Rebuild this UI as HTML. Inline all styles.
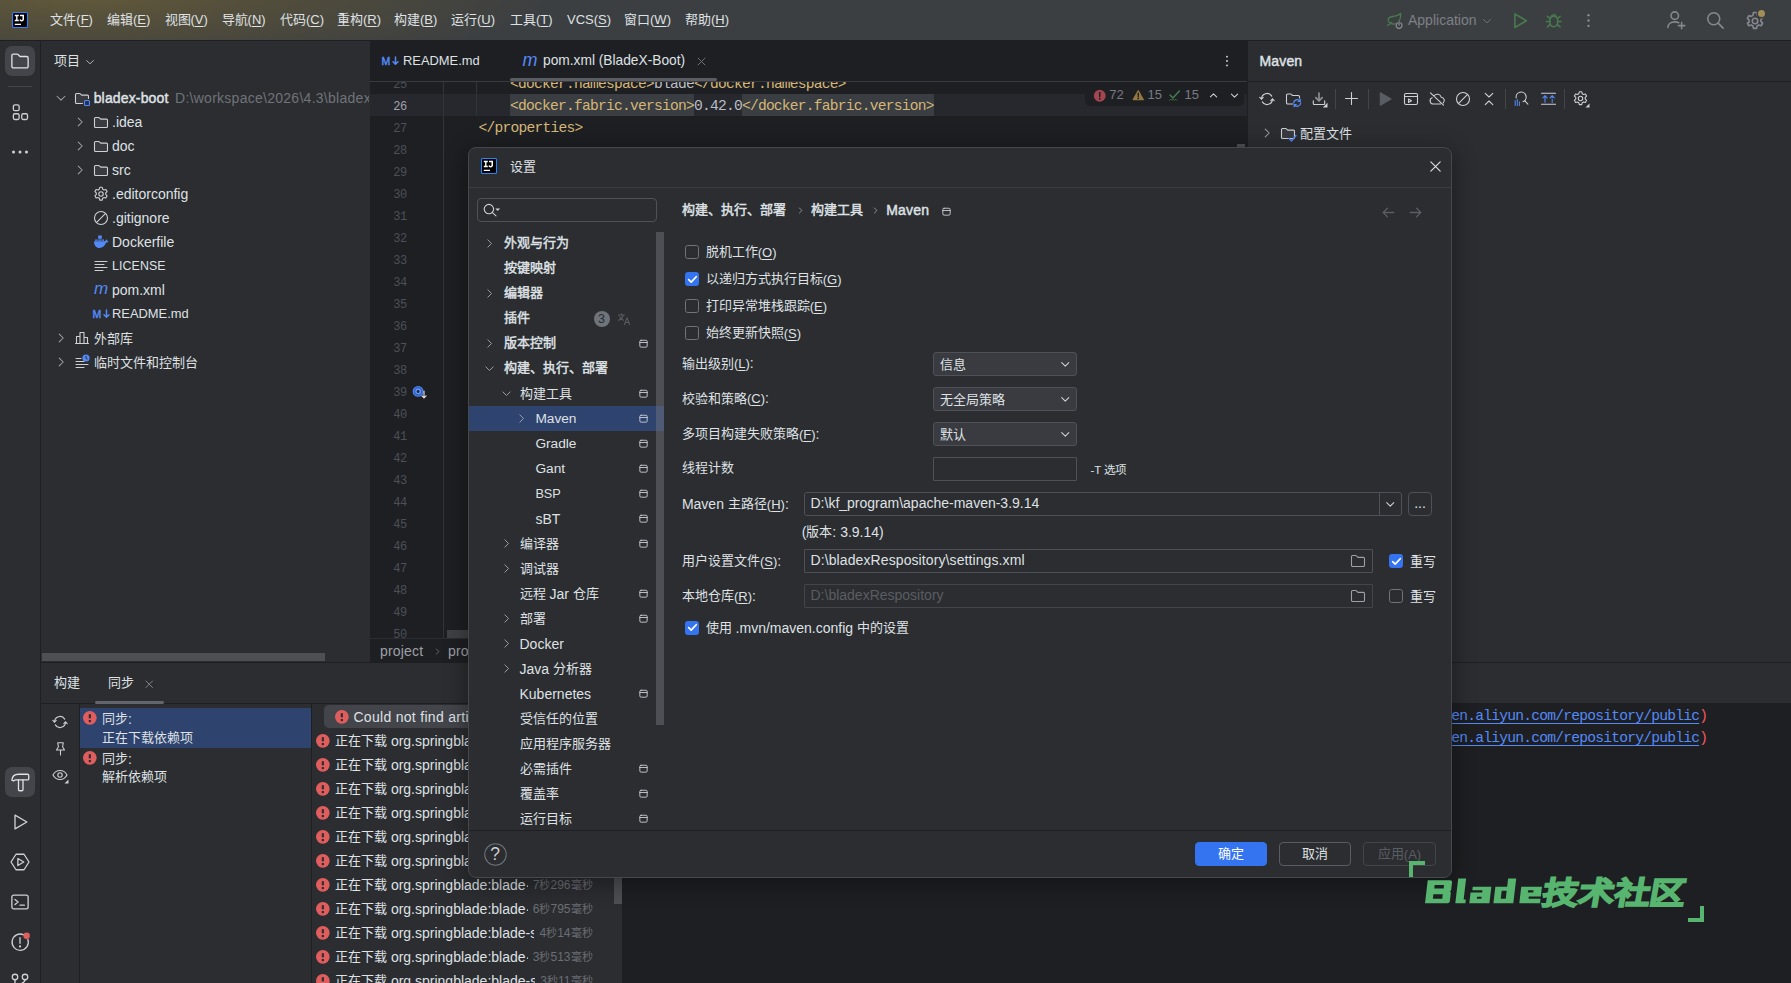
<!DOCTYPE html>
<html lang="zh-CN"><head><meta charset="utf-8"><title>bladex-boot – pom.xml (BladeX-Boot)</title>
<style>
html,body{margin:0;padding:0;background:#1e1f22;}
body{width:1791px;height:983px;overflow:hidden;position:relative;font-family:"Liberation Sans",sans-serif;font-size:14px;color:#dfe1e5;}
.t{position:absolute;white-space:nowrap;font-size:14px;color:#dfe1e5;}
.c{font-size:13px;font-weight:400;position:relative;top:-0.7px;}
.bold{font-weight:normal;font-size:14px;letter-spacing:0.15px;-webkit-text-stroke:0.45px currentColor;}
.bold .c{font-weight:400;letter-spacing:0;}
.b{position:absolute;box-sizing:border-box;}
.i{position:absolute;overflow:visible;color:#ced0d6;fill:none;stroke:currentColor;stroke-width:1.1;stroke-linecap:round;stroke-linejoin:round;}
.m{font-family:"Liberation Mono",monospace;font-size:14.6px;letter-spacing:-0.762px;}
.g{color:#868a91;}
.k{font-size:13px;}
u{text-decoration:underline;text-underline-offset:2px;text-decoration-thickness:1px;}
.clip{position:absolute;overflow:hidden;}

.ln{font-family:"Liberation Mono",monospace;font-size:12px;letter-spacing:-0.45px;color:#4b5059;text-align:right;}
.tag{color:#d5b778;}
.txt{color:#bcbec4;}
.hl{background:#3a3d41;}
.cb{position:absolute;box-sizing:border-box;width:14px;height:14px;border:1px solid #6f737a;border-radius:2.5px;background:#2b2d30;}
.cb.on{background:#3574f0;border-color:#3574f0;}
.inp{position:absolute;box-sizing:border-box;border:1px solid #4e5157;border-radius:4px;background:#2b2d30;}
.btn{position:absolute;box-sizing:border-box;border:1px solid #5a5d63;border-radius:4px;text-align:center;}
.lnk{color:#548af7;text-decoration:underline;text-underline-offset:3px;}

</style></head><body>
<svg width="0" height="0" style="position:absolute"><defs>

<g id="ijlogo"><rect x=".5" y=".5" width="15" height="15" rx="1" fill="#000" stroke="#2a84f5" stroke-width="1.100"/><path fill="#fff" stroke="none" d="M2.800 2.800h4v1.400H5.500v3.600h1.300v1.400h-4V7.800h1.300V4.200H2.800ZM8 2.800h4v4.300c0 1.500-.9 2.300-2.300 2.300-1.200 0-2-.6-2.300-1.600l1.200-.6c.2.600.5.800 1 .8.600 0 .9-.4.900-1V4.200H8ZM2.800 11.800h6.200v1.200H2.800Z"/></g>
<g id="chevR"><path d="M6 3.5L10.5 8L6 12.5"/></g>
<g id="chevD"><path d="M3.5 6L8 10.5L12.5 6"/></g>
<g id="chevU"><path d="M3.5 10L8 5.5L12.5 10"/></g>
<g id="folder"><path fill="#393b40" d="M1.500 4.500a1 1 0 0 1 1-1H5.700a1 1 0 0 1 .7.3L7.700 5.100H13.500a1 1 0 0 1 1 1V12.500a1 1 0 0 1-1 1H2.500a1 1 0 0 1-1-1Z"/></g>
<g id="modfolder"><path fill="#393b40" d="M8.500 13.500H2.500a1 1 0 0 1-1-1V4.500a1 1 0 0 1 1-1H5.700a1 1 0 0 1 .7.3L7.700 5.100H13.500a1 1 0 0 1 1 1V8.500"/><rect x="10.5" y="10.5" width="5" height="5" rx="1" stroke="#548af7" fill="#25324d"/></g>
<g id="gearfile"><circle cx="8" cy="8" r="2.200"/><path d="M6.800 1.300h2.400l.5 1.900 1.300.75 1.900-.5 1.200 2.100-1.400 1.400v1.500l1.400 1.400-1.200 2.100-1.900-.5-1.300.75-.5 1.900H6.800l-.5-1.900-1.300-.75-1.900.5-1.200-2.100 1.400-1.400V6.950L1.900 5.550l1.200-2.100 1.900.5 1.300-.75Z"/></g>
<g id="ignore"><circle cx="8" cy="8" r="6.5"/><path d="M3.6 12.4L12.4 3.6"/></g>
<g id="docker"><path fill="#548af7" stroke="none" d="M5.2 1.5h3.6v3.3H5.2zM1 7.2h11.2c.3-1 .9-1.6 1.6-1.9.3.5.4 1 .3 1.6.5-.1 1 .1 1.4.5-.5.9-1.4 1.2-2.4 1.2C12 12 9.600 14 6.500 14 3.200 14 1 11.500 1 7.200zM2 5.400h2.600v1.400H2zM5.200 5.400h2.600v1.400H5.200zM8.400 5.400h2.600v1.400H8.400z"/></g>
<g id="textfile"><path d="M2 3.500h12M2 6.500h9M2 9.500h12M2 12.500h8"/></g>
<g id="library"><path d="M2.500 13.500V6.500h3.500v7M6 13.500V2.500h4v11M10 13.500V7.500h3.500v6M1.500 13.500h13"/></g>
<g id="scratch"><path d="M2 4.500h5M2 7.500h8M2 10.500h12M2 13.500h8"/><circle cx="12" cy="4" r="3.6" fill="#548af7" stroke="none"/><path d="M12 2.300V4.200l1.200.8" stroke="#2b2d30" stroke-width="1"/></g>
<g id="close"><path d="M3 3L13 13M13 3L3 13"/></g>
<g id="kebab"><circle cx="8" cy="3" r="1.100" fill="currentColor" stroke="none"/><circle cx="8" cy="8" r="1.100" fill="currentColor" stroke="none"/><circle cx="8" cy="13" r="1.100" fill="currentColor" stroke="none"/></g>
<g id="dots"><circle cx="3.300" cy="8" r="1.100" fill="currentColor" stroke="none"/><circle cx="8" cy="8" r="1.100" fill="currentColor" stroke="none"/><circle cx="12.700" cy="8" r="1.100" fill="currentColor" stroke="none"/></g>
<g id="err"><circle cx="8" cy="8" r="7" fill="#e05d5d" stroke="none"/><path d="M8 4.300V8.500" stroke="#2b2d30" stroke-width="2.200" stroke-linecap="butt"/><rect x="6.900" y="10.200" width="2.200" height="2.200" fill="#2b2d30" stroke="none"/></g>
<g id="errs"><circle cx="8" cy="8" r="7" fill="#a3464f" stroke="none"/><path d="M8 4.200V8.800" stroke="#1e1f22" stroke-width="1.800"/><circle cx="8" cy="11.500" r="1.100" fill="#1e1f22" stroke="none"/></g>
<g id="warn"><path d="M8 2.500L14.300 13.500H1.700Z" fill="#957741" stroke="#957741" stroke-width="1.8"/><path d="M8 5.500V9.500" stroke="#1e1f22" stroke-width="1.800"/><circle cx="8" cy="12" r="1.100" fill="#1e1f22" stroke="none"/></g>
<g id="okcheck"><path d="M2.500 7.500L6 11L14 2.500" stroke="#46824f" stroke-width="1.700"/><path d="M2 14l1.500-1.500L5 14l1.500-1.500L8 14l1.500-1.500L11 14" stroke="#46824f" stroke-width="1"/></g>
<g id="refresh"><path d="M2.500 8A5.500 5.500 0 0 1 12.700 5.100M13.500 8A5.500 5.500 0 0 1 3.300 10.900"/><path d="M0.800 6.400L2.500 8.100L4.200 6.400M11.800 9.600L13.500 7.900L15.200 9.600"/></g>
<g id="foldersync"><path d="M7.500 13H2.700a1.200 1.200 0 0 1-1.200-1.200V4.200a1.200 1.200 0 0 1 1.200-1.200H5.600a1 1 0 0 1 .75.330L7.600 4.500H13.300a1.200 1.200 0 0 1 1.200 1.200V7"/><g stroke="#548af7" stroke-width="1.300"><path d="M15.700 12a3.500 3.500 0 0 1-6.400 1.700M8.700 12a3.500 3.500 0 0 1 6.400-1.700"/><path d="M13.200 10.300h2V8.300M11.200 13.700h-2v2"/></g></g>
<g id="download"><path d="M8 2v7.500M4.800 6.700L8 9.800l3.200-3.100" stroke="#8c8e93" stroke-width="1.700"/><path d="M2.300 9.800v2.700a1 1 0 0 0 1 1h9.400a1 1 0 0 0 1-1V9.800"/><path d="M16.500 11.800V16.500H11.800Z" fill="currentColor" stroke="none"/></g>
<g id="plus"><path d="M7.500 1.500v12M1.500 7.500h12"/></g>
<g id="playfill"><path d="M3.300 1.800L14 8L3.300 14.200Z" fill="#5a5d63" stroke="#5a5d63"/></g>
<g id="winplay"><rect x="1.500" y="2.500" width="13" height="11" rx="1.500"/><path d="M1.500 5.500h13M5.500 8v3.500L8.500 9.700Z"/></g>
<g id="cloudoff"><path d="M5 4.800A4.200 4.200 0 0 1 12.300 6.300a3.200 3.200 0 0 1 2 5.500M11.500 13H4.200a3.200 3.200 0 0 1-1-6.200M1.500 1.800L14.500 14.200"/></g>
<g id="noentry"><circle cx="8" cy="8" r="6.500"/><path d="M3.600 12.400L12.400 3.600"/></g>
<g id="collapse"><path d="M4.200 2.300L8 6L11.800 2.300M4.200 13.700L8 10L11.800 13.700"/></g>
<g id="analyze"><path d="M3.200 7A5 5 0 1 1 10 10.700"/><path d="M11.600 9.700L14.900 13.100"/><path d="M2.200 9.500v5M4.300 8.500v6M6.400 10.800v3.700" stroke="#548af7" stroke-width="1"/></g>
<g id="ttblue"><path d="M1.500 2.300h14M1.500 13.200h14"/><path stroke="#548af7" d="M5 11.300V4.700M2.900 6.800L5 4.700L7.100 6.800M12.200 6.500V4.700M10.100 6.800L12.200 4.700L14.300 6.800M12.200 8.200v1.300M12.200 10.600v.9"/></g>
<g id="gear"><circle cx="8" cy="8" r="2"/><path d="M6.900 1.800h2.200l.45 1.700 1.200.7 1.700-.47 1.100 1.900-1.250 1.250v1.400l1.250 1.250-1.100 1.900-1.700-.47-1.200.7-.45 1.700H6.900l-.45-1.700-1.200-.7-1.700.47-1.100-1.900L3.700 8.700V7.300L2.450 6.050l1.100-1.900 1.700.47 1.200-.7Z"/></g>
<g id="geardd"><circle cx="7.500" cy="7.500" r="2.200"/><path d="M6.300 .8h2.400l.5 1.900 1.300.75 1.900-.5 1.200 2.100-1.400 1.400v1.500l1.400 1.400-1.200 2.100-1.900-.5-1.300.75-.5 1.900H6.300l-.5-1.900-1.300-.75-1.900.5-1.200-2.100 1.400-1.400V6.450L1.400 5.050l1.200-2.100 1.900.5 1.300-.75Z"/><path d="M16.500 12.500v4h-4Z" fill="currentColor" stroke="none"/></g>
<g id="search"><circle cx="7" cy="7" r="4.800"/><path d="M10.500 10.500L14.500 14.500"/></g>
<g id="searchdd"><circle cx="4.900" cy="6.100" r="4.700"/><path d="M8.500 9.700L12 12.900"/><path d="M11.300 5.600h4.800l-2.400 2.500Z" fill="currentColor" stroke="none"/></g>
<g id="projcfg"><rect x="3.500" y="4" width="9" height="8.500" rx="1.500"/><path d="M3.500 6.800h9"/></g>
<g id="translate"><path d="M1.500 3.500h7M5 2v1.500M7.200 3.500C6.500 6.500 4.500 8.500 2 9.500M3.200 5.500C4 7.500 5.500 8.800 7.500 9.500M8.500 14.500L11.500 6.500L14.500 14.500M9.500 12h4"/></g>
<g id="arrowL"><path d="M13 8H3M7 4L3 8L7 12"/></g>
<g id="arrowR"><path d="M3 8H13M9 4L13 8L9 12"/></g>
<g id="pin"><path d="M5 1.800h6L10.200 6.200L12.300 9.700H3.700L5.800 6.200ZM8 9.700V14.800"/></g>
<g id="eye"><path d="M1 8C2.500 5 5 3.500 8 3.500S13.500 5 15 8C13.500 11 11 12.500 8 12.500S2.500 11 1 8Z"/><circle cx="8" cy="8" r="2.200"/><path d="M16.500 12.500v4H12.500Z" fill="currentColor" stroke="none"/></g>
<g id="tw_folder"><path d="M1.500 3.700a1.200 1.200 0 0 1 1.200-1.200H5.600a1.200 1.200 0 0 1 .85.350L8 4.400H13.300a1.200 1.200 0 0 1 1.200 1.200V12.300a1.200 1.200 0 0 1-1.200 1.200H2.700a1.200 1.200 0 0 1-1.200-1.200Z"/></g>
<g id="structure"><rect x="2.700" y="2.300" width="4.600" height="4.600" rx="1.200"/><rect x="2.700" y="9.400" width="4.600" height="4.600" rx="1.200"/><rect x="9.400" y="9.400" width="4.600" height="4.600" rx="1.200"/></g>
<g id="hammer"><path d="M6.800 6.300V14a1 1 0 0 0 1 1h1.600a1 1 0 0 0 1-1V6.300"/><path d="M1.500 6.500C1.800 3.600 3.800 1.800 6.800 1.800H14a1 1 0 0 1 1 1V5.300a1 1 0 0 1-1 1H4.800C4 6.300 3.400 6.600 3 7.200Z"/></g>
<g id="run"><path d="M4 2.500L13.500 8L4 13.500Z"/></g>
<g id="services"><path d="M4.800 1.800h6.400L15.200 8L11.200 14.200H4.800L.8 8Z"/><path d="M6.300 5.200v5.600L11 8Z"/></g>
<g id="terminal"><rect x="1.500" y="2.500" width="13" height="11" rx="1.500"/><path d="M4 6l2.500 2L4 10M8 10.500h3.500"/></g>
<g id="problems"><path d="M11 2.300A6.500 6.500 0 1 0 14.300 6"/><path d="M8 4.500V9"/><circle cx="8" cy="11.500" r=".9" fill="currentColor" stroke="none"/><circle cx="13.300" cy="3" r="2.600" fill="#e05d5d" stroke="none"/></g>
<g id="git"><circle cx="4" cy="4" r="2.200"/><circle cx="12" cy="4" r="2.200"/><path d="M4 6.200V16M12 6.200c0 4-8 3-8 7"/></g>
<g id="spring"><path d="M13.800 1.300C14.300 6 12.300 11.300 7.200 11.300C4.200 11.300 1.800 9.400 2.100 6.900C2.500 4 6.200 4.300 9.200 3.700C11.200 3.300 13 2.500 13.800 1.300Z" stroke="#487a4f" stroke-width="1.200"/><path d="M1.300 12.600C3 12 4.500 11 5.500 9.800" stroke="#487a4f" stroke-width="1.200"/><circle cx="12.300" cy="12.300" r="3.600" fill="#3c3f41" stroke="none"/><path d="M10.700 10.300A2.800 2.800 0 1 0 13.900 10.300M12.300 9.300V12.300" stroke="#8c8f96" stroke-width="1.100"/></g>
<g id="bug"><path d="M4.800 8.300a3.200 3.200 0 0 1 6.400 0v2.200a3.200 3.200 0 0 1-6.400 0Z"/><path d="M5.800 5.600A2.300 2.300 0 0 1 10.200 5.600M4.800 9.500H2M14 9.500H11.200M5 7L2.800 5.200M11 7L13.200 5.200M5.200 11.800L2.800 13.800M10.800 11.800L13.200 13.800"/></g>
<g id="adduser"><circle cx="7" cy="4.500" r="3"/><path d="M1.500 14c0-3 2.500-4.500 5.500-4.500 1.200 0 2.300.25 3.200.7M12.500 10v5M10 12.500h5"/></g>
<g id="help"><circle cx="8" cy="8" r="7.500" stroke-width=".7"/></g>
<g id="check"><path d="M3.300 8.200L6.400 11.300L12.600 4.600" stroke="#fff" stroke-width="2.100"/></g>
<g id="gutter"><circle cx="6.500" cy="6.800" r="5.200" stroke="#4b82f0" stroke-width="1.300" fill="#3263c4"/><circle cx="6.500" cy="6.800" r="2.300" stroke="#6ea1ff" stroke-width="1.300" fill="#1e2a4a"/><path d="M12.800 6.500v7.300M10.600 11.600l2.200 2.200 2.200-2.200" stroke="#dfe1e5" stroke-width="1.200"/></g>

</defs></svg>
<div class="b " style="left:0px;top:0px;width:1791px;height:40px;background:radial-gradient(ellipse 470px 80px at 80px -6px,#625a3b 0%,#534e3b 38%,rgba(60,63,65,0) 100%),#3c3f41;"></div>
<div class="b " style="left:0px;top:40px;width:1791px;height:1px;background:#1e1f22;"></div>
<svg class="i" style="left:12px;top:12px;width:16px;height:16px;" viewBox="0 0 16 16"><use href="#ijlogo"/></svg>
<div class="t " style="left:50.3px;top:10.3px;height:20px;line-height:20px;font-size:13px;"><span class="c">文件</span><span class="k">(<u>F</u>)</span></div>
<div class="t " style="left:107px;top:10.3px;height:20px;line-height:20px;font-size:13px;"><span class="c">编辑</span><span class="k">(<u>E</u>)</span></div>
<div class="t " style="left:164.5px;top:10.3px;height:20px;line-height:20px;font-size:13px;"><span class="c">视图</span><span class="k">(<u>V</u>)</span></div>
<div class="t " style="left:221.6px;top:10.3px;height:20px;line-height:20px;font-size:13px;"><span class="c">导航</span><span class="k">(<u>N</u>)</span></div>
<div class="t " style="left:280px;top:10.3px;height:20px;line-height:20px;font-size:13px;"><span class="c">代码</span><span class="k">(<u>C</u>)</span></div>
<div class="t " style="left:337px;top:10.3px;height:20px;line-height:20px;font-size:13px;"><span class="c">重构</span><span class="k">(<u>R</u>)</span></div>
<div class="t " style="left:394px;top:10.3px;height:20px;line-height:20px;font-size:13px;"><span class="c">构建</span><span class="k">(<u>B</u>)</span></div>
<div class="t " style="left:451px;top:10.3px;height:20px;line-height:20px;font-size:13px;"><span class="c">运行</span><span class="k">(<u>U</u>)</span></div>
<div class="t " style="left:510px;top:10.3px;height:20px;line-height:20px;font-size:13px;"><span class="c">工具</span><span class="k">(<u>T</u>)</span></div>
<div class="t " style="left:567px;top:10.3px;height:20px;line-height:20px;font-size:13px;">VCS<span class="k">(<u>S</u>)</span></div>
<div class="t " style="left:624px;top:10.3px;height:20px;line-height:20px;font-size:13px;"><span class="c">窗口</span><span class="k">(<u>W</u>)</span></div>
<div class="t " style="left:685px;top:10.3px;height:20px;line-height:20px;font-size:13px;"><span class="c">帮助</span><span class="k">(<u>H</u>)</span></div>
<svg class="i" style="left:1386px;top:12px;width:17px;height:17px;" viewBox="0 0 16 16"><use href="#spring"/></svg>
<div class="t " style="left:1408px;top:10.3px;height:20px;line-height:20px;color:#7d8087;">Application</div>
<svg class="i" style="left:1481px;top:14.5px;width:12px;height:12px;color:#7d8087;" viewBox="0 0 16 16"><use href="#chevD"/></svg>
<svg class="i" style="left:1510.25px;top:10.75px;width:19.5px;height:19.5px;color:#487a4f;stroke-width:1.3;" viewBox="0 0 16 16"><use href="#run"/></svg>
<svg class="i" style="left:1544.25px;top:10.25px;width:19.5px;height:19.5px;color:#487a4f;stroke-width:1.25;" viewBox="0 0 16 16"><use href="#bug"/></svg>
<svg class="i" style="left:1579.5px;top:11.5px;width:17px;height:17px;color:#8c8f96;" viewBox="0 0 16 16"><use href="#kebab"/></svg>
<svg class="i" style="left:1666px;top:10px;width:20px;height:20px;color:#85888f;stroke-width:1.25;" viewBox="0 0 16 16"><use href="#adduser"/></svg>
<svg class="i" style="left:1705px;top:10px;width:20px;height:20px;color:#85888f;stroke-width:1.25;" viewBox="0 0 16 16"><use href="#search"/></svg>
<svg class="i" style="left:1743.5px;top:9.5px;width:22px;height:22px;color:#85888f;stroke-width:1.2;" viewBox="0 0 16 16"><use href="#gear"/></svg>
<div class="b " style="left:1757.5px;top:9.5px;width:7.5px;height:7.5px;background:#a48d57;border-radius:50%;box-shadow:0 0 0 1.5px #3c3f41;"></div>
<div class="b " style="left:0px;top:41px;width:40px;height:942px;background:#2b2d30;"></div>
<div class="b " style="left:40px;top:41px;width:1px;height:942px;background:#1e1f22;"></div>
<div class="b " style="left:5px;top:46px;width:30px;height:30px;background:#43454a;border-radius:7px;"></div>
<svg class="i" style="left:9.5px;top:51px;width:20px;height:20px;color:#dfe1e5;stroke-width:1.05;" viewBox="0 0 16 16"><use href="#tw_folder"/></svg>
<div class="b " style="left:8px;top:86px;width:24px;height:1px;background:#43454a;"></div>
<svg class="i" style="left:9.5px;top:102px;width:20px;height:20px;color:#ced0d6;stroke-width:1.05;" viewBox="0 0 16 16"><use href="#structure"/></svg>
<svg class="i" style="left:8.5px;top:141px;width:22px;height:22px;color:#ced0d6;" viewBox="0 0 16 16"><use href="#dots"/></svg>
<div class="b " style="left:5px;top:767px;width:30px;height:30px;background:#43454a;border-radius:7px;"></div>
<svg class="i" style="left:9.5px;top:772px;width:20px;height:20px;color:#dfe1e5;stroke-width:1.05;" viewBox="0 0 16 16"><use href="#hammer"/></svg>
<svg class="i" style="left:10px;top:812px;width:20px;height:20px;color:#ced0d6;stroke-width:1.05;" viewBox="0 0 16 16"><use href="#run"/></svg>
<svg class="i" style="left:9.5px;top:852px;width:20px;height:20px;color:#ced0d6;stroke-width:1.05;" viewBox="0 0 16 16"><use href="#services"/></svg>
<svg class="i" style="left:9.5px;top:892px;width:20px;height:20px;color:#ced0d6;stroke-width:1.05;" viewBox="0 0 16 16"><use href="#terminal"/></svg>
<svg class="i" style="left:9.5px;top:932px;width:20px;height:20px;color:#ced0d6;stroke-width:1.05;" viewBox="0 0 16 16"><use href="#problems"/></svg>
<svg class="i" style="left:9.5px;top:972px;width:20px;height:20px;color:#ced0d6;stroke-width:1.05;" viewBox="0 0 16 16"><use href="#git"/></svg>
<div class="b " style="left:41px;top:41px;width:329px;height:621px;background:#2b2d30;"></div>
<div class="t " style="left:53.5px;top:51px;height:20px;line-height:20px;"><span class="c">项目</span></div>
<svg class="i" style="left:83.5px;top:55.5px;width:12px;height:12px;color:#ced0d6;" viewBox="0 0 16 16"><use href="#chevD"/></svg>
<svg class="i" style="left:54px;top:91px;width:14px;height:14px;color:#9da0a8;stroke-width:1.2;" viewBox="0 0 16 16"><use href="#chevD"/></svg>
<svg class="i" style="left:74px;top:90px;width:16px;height:16px;color:#ced0d6;" viewBox="0 0 16 16"><use href="#modfolder"/></svg>
<div class="t bold" style="left:93.7px;top:88.4px;height:20px;line-height:20px;">bladex-boot</div>
<svg class="i" style="left:72.5px;top:115px;width:14px;height:14px;color:#9da0a8;stroke-width:1.2;" viewBox="0 0 16 16"><use href="#chevR"/></svg>
<svg class="i" style="left:93px;top:114px;width:16px;height:16px;color:#ced0d6;" viewBox="0 0 16 16"><use href="#folder"/></svg>
<div class="t " style="left:112px;top:112.4px;height:20px;line-height:20px;">.idea</div>
<svg class="i" style="left:72.5px;top:139px;width:14px;height:14px;color:#9da0a8;stroke-width:1.2;" viewBox="0 0 16 16"><use href="#chevR"/></svg>
<svg class="i" style="left:93px;top:138px;width:16px;height:16px;color:#ced0d6;" viewBox="0 0 16 16"><use href="#folder"/></svg>
<div class="t " style="left:112px;top:136.4px;height:20px;line-height:20px;">doc</div>
<svg class="i" style="left:72.5px;top:163px;width:14px;height:14px;color:#9da0a8;stroke-width:1.2;" viewBox="0 0 16 16"><use href="#chevR"/></svg>
<svg class="i" style="left:93px;top:162px;width:16px;height:16px;color:#ced0d6;" viewBox="0 0 16 16"><use href="#folder"/></svg>
<div class="t " style="left:112px;top:160.4px;height:20px;line-height:20px;">src</div>
<svg class="i" style="left:93px;top:186px;width:16px;height:16px;color:#ced0d6;" viewBox="0 0 16 16"><use href="#gearfile"/></svg>
<div class="t " style="left:112px;top:184.4px;height:20px;line-height:20px;">.editorconfig</div>
<svg class="i" style="left:93px;top:210px;width:16px;height:16px;color:#ced0d6;" viewBox="0 0 16 16"><use href="#ignore"/></svg>
<div class="t " style="left:112px;top:208.4px;height:20px;line-height:20px;">.gitignore</div>
<svg class="i" style="left:93px;top:234px;width:16px;height:16px;color:#ced0d6;" viewBox="0 0 16 16"><use href="#docker"/></svg>
<div class="t " style="left:112px;top:232.4px;height:20px;line-height:20px;">Dockerfile</div>
<svg class="i" style="left:93px;top:258px;width:16px;height:16px;color:#ced0d6;" viewBox="0 0 16 16"><use href="#textfile"/></svg>
<div class="t " style="left:112px;top:256.4px;height:20px;line-height:20px;font-size:12.4px;letter-spacing:0.1px;">LICENSE</div>
<div class="t " style="left:93px;top:280.5px;height:16px;line-height:16px;font-style:italic;font-size:17px;color:#548af7;width:16px;text-align:center;">m</div>
<div class="t " style="left:112px;top:280.4px;height:20px;line-height:20px;">pom.xml</div>
<div class="t bold" style="left:92.5px;top:308px;height:12px;line-height:12px;font-size:10.5px;color:#548af7;letter-spacing:0;">M</div>
<svg class="i" style="left:102.5px;top:309px;width:7px;height:10px;color:#548af7;stroke-width:1.5" viewBox="0 0 7 10"><path d="M3.500 1V8M1 5.700L3.500 8.200L6 5.700"/></svg>
<div class="t " style="left:112px;top:304.4px;height:20px;line-height:20px;font-size:12.9px;">README.md</div>
<svg class="i" style="left:54px;top:331px;width:14px;height:14px;color:#9da0a8;stroke-width:1.2;" viewBox="0 0 16 16"><use href="#chevR"/></svg>
<svg class="i" style="left:74px;top:330px;width:16px;height:16px;color:#ced0d6;" viewBox="0 0 16 16"><use href="#library"/></svg>
<div class="t " style="left:93.7px;top:328.4px;height:20px;line-height:20px;"><span class="c">外部库</span></div>
<svg class="i" style="left:54px;top:355px;width:14px;height:14px;color:#9da0a8;stroke-width:1.2;" viewBox="0 0 16 16"><use href="#chevR"/></svg>
<svg class="i" style="left:74px;top:354px;width:16px;height:16px;color:#ced0d6;" viewBox="0 0 16 16"><use href="#scratch"/></svg>
<div class="t " style="left:93.7px;top:352.4px;height:20px;line-height:20px;"><span class="c">临时文件和控制台</span></div>
<div class="clip" style="left:175px;top:86px;width:194px;height:24px;"><div class="t g" style="left:0;top:2px;height:20px;line-height:20px;color:#6f737a;letter-spacing:0.27px;">D:\workspace\2026\4.3\bladex-boot</div></div>
<div class="b " style="left:42px;top:653px;width:283px;height:8px;background:#4d4f53;"></div>
<div class="b " style="left:41px;top:662px;width:1750px;height:1px;background:#1e1f22;"></div>
<div class="b " style="left:370px;top:41px;width:877px;height:621px;background:#1e1f22;"></div>
<div class="b " style="left:370px;top:81px;width:877px;height:1px;background:#393b40;"></div>
<div class="t bold" style="left:381.5px;top:55px;height:12px;line-height:12px;font-size:10.5px;color:#548af7;letter-spacing:0;">M</div>
<svg class="i" style="left:391.5px;top:56px;width:7px;height:10px;color:#548af7;stroke-width:1.5" viewBox="0 0 7 10"><path d="M3.500 1V8M1 5.700L3.500 8.200L6 5.700"/></svg>
<div class="t " style="left:403px;top:51.3px;height:20px;line-height:20px;font-size:12.9px;">README.md</div>
<div class="t " style="left:522px;top:51.5px;height:16px;line-height:16px;font-style:italic;font-size:18px;color:#548af7;width:16px;text-align:center;">m</div>
<div class="t " style="left:543px;top:51.3px;height:20px;line-height:20px;font-size:13.75px;">pom.xml (BladeX-Boot)</div>
<svg class="i" style="left:695.5px;top:56px;width:11px;height:11px;color:#6f737a;stroke-width:1.4;" viewBox="0 0 16 16"><use href="#close"/></svg>
<div class="b " style="left:510px;top:78px;width:207px;height:3px;background:#5a5d63;border-radius:1.5px;"></div>
<svg class="i" style="left:1220px;top:54px;width:14px;height:14px;color:#ced0d6;" viewBox="0 0 16 16"><use href="#kebab"/></svg>
<div class="clip" style="left:370px;top:82px;width:877px;height:556px;">
<div class="b " style="left:0px;top:12px;width:877px;height:22px;background:#26282e;"></div>
<div class="b " style="left:73px;top:0px;width:1px;height:556px;background:#313438;"></div>
<div class="b " style="left:106px;top:0px;width:1px;height:34px;background:#313438;"></div>
<div class="t ln" style="left:0px;top:-8px;height:22px;line-height:22px;width:36.8px;">25</div>
<div class="t ln" style="left:0px;top:14px;height:22px;line-height:22px;width:36.8px;color:#a1a3ab;">26</div>
<div class="t ln" style="left:0px;top:36px;height:22px;line-height:22px;width:36.8px;">27</div>
<div class="t ln" style="left:0px;top:58px;height:22px;line-height:22px;width:36.8px;">28</div>
<div class="t ln" style="left:0px;top:80px;height:22px;line-height:22px;width:36.8px;">29</div>
<div class="t ln" style="left:0px;top:102px;height:22px;line-height:22px;width:36.8px;">30</div>
<div class="t ln" style="left:0px;top:124px;height:22px;line-height:22px;width:36.8px;">31</div>
<div class="t ln" style="left:0px;top:146px;height:22px;line-height:22px;width:36.8px;">32</div>
<div class="t ln" style="left:0px;top:168px;height:22px;line-height:22px;width:36.8px;">33</div>
<div class="t ln" style="left:0px;top:190px;height:22px;line-height:22px;width:36.8px;">34</div>
<div class="t ln" style="left:0px;top:212px;height:22px;line-height:22px;width:36.8px;">35</div>
<div class="t ln" style="left:0px;top:234px;height:22px;line-height:22px;width:36.8px;">36</div>
<div class="t ln" style="left:0px;top:256px;height:22px;line-height:22px;width:36.8px;">37</div>
<div class="t ln" style="left:0px;top:278px;height:22px;line-height:22px;width:36.8px;">38</div>
<div class="t ln" style="left:0px;top:300px;height:22px;line-height:22px;width:36.8px;">39</div>
<div class="t ln" style="left:0px;top:322px;height:22px;line-height:22px;width:36.8px;">40</div>
<div class="t ln" style="left:0px;top:344px;height:22px;line-height:22px;width:36.8px;">41</div>
<div class="t ln" style="left:0px;top:366px;height:22px;line-height:22px;width:36.8px;">42</div>
<div class="t ln" style="left:0px;top:388px;height:22px;line-height:22px;width:36.8px;">43</div>
<div class="t ln" style="left:0px;top:410px;height:22px;line-height:22px;width:36.8px;">44</div>
<div class="t ln" style="left:0px;top:432px;height:22px;line-height:22px;width:36.8px;">45</div>
<div class="t ln" style="left:0px;top:454px;height:22px;line-height:22px;width:36.8px;">46</div>
<div class="t ln" style="left:0px;top:476px;height:22px;line-height:22px;width:36.8px;">47</div>
<div class="t ln" style="left:0px;top:498px;height:22px;line-height:22px;width:36.8px;">48</div>
<div class="t ln" style="left:0px;top:520px;height:22px;line-height:22px;width:36.8px;">49</div>
<div class="t ln" style="left:0px;top:542px;height:22px;line-height:22px;width:36.8px;">50</div>
<div class="t m" style="left:140px;top:-9.5px;height:22px;line-height:22px;"><span class="tag">&lt;docker.namespace&gt;</span><span class="txt">blade</span><span class="tag">&lt;/docker.namespace&gt;</span></div>
<div class="b " style="left:140px;top:12px;width:184px;height:22px;background:#3a3d41;"></div>
<div class="b " style="left:371.5px;top:12px;width:192.5px;height:22px;background:#3a3d41;"></div>
<div class="t m" style="left:140px;top:12.5px;height:22px;line-height:22px;"><span class="tag">&lt;docker.fabric.version&gt;</span><span class="txt">0.42.0</span><span class="tag">&lt;/docker.fabric.version&gt;</span></div>
<div class="t m" style="left:108.5px;top:34.5px;height:22px;line-height:22px;"><span class="tag">&lt;/properties&gt;</span></div>
<svg class="i" style="left:42px;top:302.5px;width:15px;height:15px;" viewBox="0 0 16 16"><use href="#gutter"/></svg>
<div class="b " style="left:77px;top:548px;width:400px;height:7.5px;background:#3f4144;"></div>
</div>
<div class="b " style="left:1085px;top:82px;width:159px;height:24px;background:#1e1f22;border-radius:0 0 5px 5px;"></div>
<svg class="i" style="left:1092.95px;top:88.55px;width:13.5px;height:13.5px;" viewBox="0 0 16 16"><use href="#errs"/></svg>
<div class="t " style="left:1109.3px;top:85.2px;height:20px;line-height:20px;color:#787b82;font-size:13px;">72</div>
<svg class="i" style="left:1131.75px;top:88.75px;width:12.5px;height:12.5px;" viewBox="0 0 16 16"><use href="#warn"/></svg>
<div class="t " style="left:1147.5px;top:85.2px;height:20px;line-height:20px;color:#787b82;font-size:13px;">15</div>
<svg class="i" style="left:1167.5px;top:89px;width:13px;height:13px;" viewBox="0 0 16 16"><use href="#okcheck"/></svg>
<div class="t " style="left:1184.5px;top:85.2px;height:20px;line-height:20px;color:#787b82;font-size:13px;">15</div>
<svg class="i" style="left:1207.5px;top:90px;width:11px;height:11px;color:#ced0d6;stroke-width:1.500;" viewBox="0 0 16 16"><use href="#chevU"/></svg>
<svg class="i" style="left:1228.5px;top:89.5px;width:11px;height:11px;color:#ced0d6;stroke-width:1.500;" viewBox="0 0 16 16"><use href="#chevD"/></svg>
<div class="b " style="left:1237px;top:144px;width:8px;height:5px;background:#4d4f53;"></div>
<div class="b " style="left:370px;top:638px;width:877px;height:1px;background:#2b2d30;"></div>
<div class="t " style="left:380px;top:640.5px;height:20px;line-height:20px;color:#9da0a8;letter-spacing:0.18px;">project</div>
<svg class="i" style="left:432.5px;top:646.5px;width:9px;height:9px;color:#6f737a;stroke-width:1.5;" viewBox="0 0 16 16"><use href="#chevR"/></svg>
<div class="t " style="left:448px;top:640.5px;height:20px;line-height:20px;color:#9da0a8;letter-spacing:0.18px;">properties</div>
<div class="b " style="left:1247px;top:41px;width:544px;height:621px;background:#2b2d30;"></div>
<div class="b " style="left:1247px;top:41px;width:1px;height:621px;background:#1e1f22;"></div>
<div class="t bold" style="left:1259.5px;top:51.3px;height:20px;line-height:20px;">Maven</div>
<div class="b " style="left:1248px;top:81px;width:543px;height:1px;background:#1e1f22;"></div>
<svg class="i" style="left:1259px;top:91px;width:16px;height:16px;color:#ced0d6;" viewBox="0 0 16 16"><use href="#refresh"/></svg>
<svg class="i" style="left:1285px;top:91px;width:16px;height:16px;color:#ced0d6;" viewBox="0 0 16 16"><use href="#foldersync"/></svg>
<svg class="i" style="left:1311px;top:91px;width:16px;height:16px;color:#ced0d6;" viewBox="0 0 16 16"><use href="#download"/></svg>
<div class="b " style="left:1335px;top:89px;width:1px;height:20px;background:#43454a;"></div>
<svg class="i" style="left:1344px;top:91px;width:16px;height:16px;color:#ced0d6;" viewBox="0 0 16 16"><use href="#plus"/></svg>
<div class="b " style="left:1368.1px;top:89px;width:1px;height:20px;background:#43454a;"></div>
<svg class="i" style="left:1377px;top:91px;width:16px;height:16px;color:#ced0d6;" viewBox="0 0 16 16"><use href="#playfill"/></svg>
<svg class="i" style="left:1403px;top:91px;width:16px;height:16px;color:#ced0d6;" viewBox="0 0 16 16"><use href="#winplay"/></svg>
<svg class="i" style="left:1429px;top:91px;width:16px;height:16px;color:#ced0d6;" viewBox="0 0 16 16"><use href="#cloudoff"/></svg>
<svg class="i" style="left:1455px;top:91px;width:16px;height:16px;color:#ced0d6;" viewBox="0 0 16 16"><use href="#noentry"/></svg>
<svg class="i" style="left:1481px;top:91px;width:16px;height:16px;color:#ced0d6;" viewBox="0 0 16 16"><use href="#collapse"/></svg>
<div class="b " style="left:1505.2px;top:89px;width:1px;height:20px;background:#43454a;"></div>
<svg class="i" style="left:1513px;top:91px;width:16px;height:16px;color:#ced0d6;" viewBox="0 0 16 16"><use href="#analyze"/></svg>
<svg class="i" style="left:1540px;top:91px;width:16px;height:16px;color:#ced0d6;" viewBox="0 0 16 16"><use href="#ttblue"/></svg>
<div class="b " style="left:1563.9px;top:89px;width:1px;height:20px;background:#43454a;"></div>
<svg class="i" style="left:1573px;top:91px;width:16px;height:16px;color:#ced0d6;" viewBox="0 0 16 16"><use href="#geardd"/></svg>
<svg class="i" style="left:1259.5px;top:126px;width:14px;height:14px;color:#9da0a8;stroke-width:1.2;" viewBox="0 0 16 16"><use href="#chevR"/></svg>
<svg class="i" style="left:1280px;top:125px;width:16px;height:16px;color:#ced0d6;" viewBox="0 0 16 16"><use href="#folder"/></svg>
<svg class="i" style="left:1288px;top:134px;width:9px;height:8px;color:#548af7;stroke-width:1.4" viewBox="0 0 9 8"><path d="M1 4.500L3.500 7L8 1.500"/></svg>
<div class="t " style="left:1300.3px;top:123.5px;height:20px;line-height:20px;"><span class="c">配置文件</span></div>
<div class="b " style="left:41px;top:663px;width:1750px;height:320px;background:#2b2d30;"></div>
<div class="t " style="left:53.5px;top:673px;height:20px;line-height:20px;"><span class="c">构建</span></div>
<div class="t " style="left:107.8px;top:673px;height:20px;line-height:20px;"><span class="c">同步</span></div>
<svg class="i" style="left:143.55px;top:678.75px;width:10.5px;height:10.5px;color:#868a91;stroke-width:1.4;" viewBox="0 0 16 16"><use href="#close"/></svg>
<div class="b " style="left:41px;top:703px;width:1750px;height:1px;background:#1e1f22;"></div>
<div class="b " style="left:95px;top:701px;width:69px;height:3px;background:#62656b;border-radius:1.5px;"></div>
<div class="b " style="left:79px;top:704px;width:1px;height:279px;background:#1e1f22;"></div>
<svg class="i" style="left:52px;top:714px;width:16px;height:16px;color:#ced0d6;" viewBox="0 0 16 16"><use href="#refresh"/></svg>
<svg class="i" style="left:52.5px;top:740.5px;width:15px;height:15px;color:#ced0d6;" viewBox="0 0 16 16"><use href="#pin"/></svg>
<svg class="i" style="left:52px;top:766.5px;width:16px;height:16px;color:#ced0d6;" viewBox="0 0 16 16"><use href="#eye"/></svg>
<div class="b " style="left:80px;top:708px;width:231px;height:40px;background:#2e436e;"></div>
<svg class="i" style="left:81.85px;top:710.15px;width:15.7px;height:15.7px;" viewBox="0 0 16 16"><use href="#err"/></svg>
<div class="t " style="left:102px;top:708.5px;height:20px;line-height:20px;"><span class="c">同步</span>:</div>
<div class="t " style="left:102px;top:727.2px;height:20px;line-height:20px;"><span class="c">正在下载依赖项</span></div>
<svg class="i" style="left:81.85px;top:750.15px;width:15.7px;height:15.7px;" viewBox="0 0 16 16"><use href="#err"/></svg>
<div class="t " style="left:102px;top:748.5px;height:20px;line-height:20px;"><span class="c">同步</span>:</div>
<div class="t " style="left:102px;top:767px;height:20px;line-height:20px;"><span class="c">解析依赖项</span></div>
<div class="b " style="left:311px;top:704px;width:1px;height:279px;background:#1e1f22;"></div>
<div class="b " style="left:324px;top:704.5px;width:300px;height:23.5px;background:#43454a;border-radius:5px;"></div>
<svg class="i" style="left:334.15px;top:708.75px;width:15.7px;height:15.7px;" viewBox="0 0 16 16"><use href="#err"/></svg>
<div class="t " style="left:353.4px;top:706.6px;height:20px;line-height:20px;letter-spacing:0.3px;">Could not find artifact org.springblade:blade-core</div>
<svg class="i" style="left:315.15px;top:732.65px;width:15.7px;height:15.7px;" viewBox="0 0 16 16"><use href="#err"/></svg>
<div class="t " style="left:335px;top:730.5px;height:20px;line-height:20px;"><span class="c">正在下载</span> org.springblade:blade-starter</div>
<svg class="i" style="left:315.15px;top:756.65px;width:15.7px;height:15.7px;" viewBox="0 0 16 16"><use href="#err"/></svg>
<div class="t " style="left:335px;top:754.5px;height:20px;line-height:20px;"><span class="c">正在下载</span> org.springblade:blade-starter</div>
<svg class="i" style="left:315.15px;top:780.65px;width:15.7px;height:15.7px;" viewBox="0 0 16 16"><use href="#err"/></svg>
<div class="t " style="left:335px;top:778.5px;height:20px;line-height:20px;"><span class="c">正在下载</span> org.springblade:blade-starter</div>
<svg class="i" style="left:315.15px;top:804.65px;width:15.7px;height:15.7px;" viewBox="0 0 16 16"><use href="#err"/></svg>
<div class="t " style="left:335px;top:802.5px;height:20px;line-height:20px;"><span class="c">正在下载</span> org.springblade:blade-starter</div>
<svg class="i" style="left:315.15px;top:828.65px;width:15.7px;height:15.7px;" viewBox="0 0 16 16"><use href="#err"/></svg>
<div class="t " style="left:335px;top:826.5px;height:20px;line-height:20px;"><span class="c">正在下载</span> org.springblade:blade-starter</div>
<svg class="i" style="left:315.15px;top:852.65px;width:15.7px;height:15.7px;" viewBox="0 0 16 16"><use href="#err"/></svg>
<div class="t " style="left:335px;top:850.5px;height:20px;line-height:20px;"><span class="c">正在下载</span> org.springblade:blade-starter</div>
<svg class="i" style="left:315.15px;top:876.65px;width:15.7px;height:15.7px;" viewBox="0 0 16 16"><use href="#err"/></svg>
<div class="t " style="left:335px;top:874.5px;height:20px;line-height:20px;"><span class="c">正在下载</span> org.springblade:blade·</div>
<div class="t" style="right:1198.5px;top:874.5px;height:20px;line-height:20px;background:#2b2d30;padding-left:5px;color:#6b6e75;font-size:12px;">7<span style="font-size:11px">秒</span>296<span style="font-size:11px">毫</span><span style="font-size:11px">秒</span></div>
<svg class="i" style="left:315.15px;top:900.85px;width:15.7px;height:15.7px;" viewBox="0 0 16 16"><use href="#err"/></svg>
<div class="t " style="left:335px;top:898.7px;height:20px;line-height:20px;"><span class="c">正在下载</span> org.springblade:blade·</div>
<div class="t" style="right:1198.5px;top:898.7px;height:20px;line-height:20px;background:#2b2d30;padding-left:5px;color:#6b6e75;font-size:12px;">6<span style="font-size:11px">秒</span>795<span style="font-size:11px">毫</span><span style="font-size:11px">秒</span></div>
<svg class="i" style="left:315.15px;top:924.75px;width:15.7px;height:15.7px;" viewBox="0 0 16 16"><use href="#err"/></svg>
<div class="t " style="left:335px;top:922.6px;height:20px;line-height:20px;"><span class="c">正在下载</span> org.springblade:blade-s</div>
<div class="t" style="right:1198.5px;top:922.6px;height:20px;line-height:20px;background:#2b2d30;padding-left:5px;color:#6b6e75;font-size:12px;">4<span style="font-size:11px">秒</span>14<span style="font-size:11px">毫</span><span style="font-size:11px">秒</span></div>
<svg class="i" style="left:315.15px;top:948.85px;width:15.7px;height:15.7px;" viewBox="0 0 16 16"><use href="#err"/></svg>
<div class="t " style="left:335px;top:946.7px;height:20px;line-height:20px;"><span class="c">正在下载</span> org.springblade:blade·</div>
<div class="t" style="right:1198.5px;top:946.7px;height:20px;line-height:20px;background:#2b2d30;padding-left:5px;color:#6b6e75;font-size:12px;">3<span style="font-size:11px">秒</span>513<span style="font-size:11px">毫</span><span style="font-size:11px">秒</span></div>
<svg class="i" style="left:315.15px;top:972.75px;width:15.7px;height:15.7px;" viewBox="0 0 16 16"><use href="#err"/></svg>
<div class="t " style="left:335px;top:970.6px;height:20px;line-height:20px;"><span class="c">正在下载</span> org.springblade:blade-s</div>
<div class="t" style="right:1198.5px;top:970.6px;height:20px;line-height:20px;background:#2b2d30;padding-left:5px;color:#6b6e75;font-size:12px;">3<span style="font-size:11px">秒</span>11<span style="font-size:11px">毫</span><span style="font-size:11px">秒</span></div>
<div class="b " style="left:614px;top:877px;width:8.5px;height:27px;background:#4d4f53;"></div>
<div class="b " style="left:623px;top:704px;width:1168px;height:279px;background:#1e1f22;"></div>
<div class="b " style="left:622px;top:704px;width:1px;height:279px;background:#1e1f22;"></div>
<div class="t m" style="left:1411.3px;top:704.8px;height:22px;line-height:22px;"><span class="lnk">//maven.aliyun.com/repository/public</span><span style="color:#f75464">)</span></div>
<div class="t m" style="left:1411.3px;top:726.8px;height:22px;line-height:22px;"><span class="lnk">//maven.aliyun.com/repository/public</span><span style="color:#f75464">)</span></div>
<div class="b " style="left:468px;top:147px;width:984px;height:731px;background:#2b2d30;border:1px solid #45474c;border-radius:8px;box-shadow:0 5px 22px 3px rgba(0,0,0,0.33);"></div>
<div class="b " style="left:469px;top:187px;width:982px;height:1px;background:#3a3c40;"></div>
<svg class="i" style="left:481px;top:158px;width:16px;height:16px;" viewBox="0 0 16 16"><use href="#ijlogo"/></svg>
<div class="t " style="left:510px;top:156.4px;height:20px;line-height:20px;"><span class="c">设置</span></div>
<svg class="i" style="left:1427.5px;top:159.3px;width:15px;height:15px;color:#dfe1e5;stroke-width:1.200;" viewBox="0 0 16 16"><use href="#close"/></svg>
<div class="inp" style="left:477px;top:198px;width:180px;height:24px;"></div>
<svg class="i" style="left:484px;top:203px;width:16px;height:16px;color:#ced0d6;stroke-width:1.100;" viewBox="0 0 16 16"><use href="#searchdd"/></svg>
<svg class="i" style="left:483px;top:237px;width:13px;height:13px;color:#9da0a8;stroke-width:1.200;" viewBox="0 0 16 16"><use href="#chevR"/></svg>
<div class="t bold" style="left:503.5px;top:232.7px;height:20px;line-height:20px;"><span class="c">外观与行为</span></div>
<div class="t bold" style="left:503.5px;top:257.7px;height:20px;line-height:20px;"><span class="c">按键映射</span></div>
<svg class="i" style="left:483px;top:287px;width:13px;height:13px;color:#9da0a8;stroke-width:1.200;" viewBox="0 0 16 16"><use href="#chevR"/></svg>
<div class="t bold" style="left:503.5px;top:282.7px;height:20px;line-height:20px;"><span class="c">编辑器</span></div>
<div class="t bold" style="left:503.5px;top:307.7px;height:20px;line-height:20px;"><span class="c">插件</span></div>
<div class="b " style="left:593.5px;top:310.5px;width:16px;height:16px;background:#6f737a;border-radius:50%;"></div>
<div class="t " style="left:593.5px;top:310.5px;height:16px;line-height:16px;width:16px;text-align:center;color:#2b2d30;font-size:12.500px;">3</div>
<svg class="i" style="left:617px;top:311.5px;width:14px;height:14px;color:#5a5d63;stroke-width:1.200;" viewBox="0 0 16 16"><use href="#translate"/></svg>
<svg class="i" style="left:483px;top:337px;width:13px;height:13px;color:#9da0a8;stroke-width:1.200;" viewBox="0 0 16 16"><use href="#chevR"/></svg>
<div class="t bold" style="left:503.5px;top:332.7px;height:20px;line-height:20px;"><span class="c">版本控制</span></div>
<svg class="i" style="left:637px;top:337px;width:13px;height:13px;color:#ced0d6;stroke-width:1.100;" viewBox="0 0 16 16"><use href="#projcfg"/></svg>
<svg class="i" style="left:483px;top:362px;width:13px;height:13px;color:#9da0a8;stroke-width:1.200;" viewBox="0 0 16 16"><use href="#chevD"/></svg>
<div class="t bold" style="left:503.5px;top:357.7px;height:20px;line-height:20px;"><span class="c">构建、执行、部署</span></div>
<svg class="i" style="left:499.5px;top:387px;width:13px;height:13px;color:#9da0a8;stroke-width:1.200;" viewBox="0 0 16 16"><use href="#chevD"/></svg>
<div class="t " style="left:519.5px;top:383.5px;height:20px;line-height:20px;"><span class="c">构建工具</span></div>
<svg class="i" style="left:637px;top:387px;width:13px;height:13px;color:#ced0d6;stroke-width:1.100;" viewBox="0 0 16 16"><use href="#projcfg"/></svg>
<div class="b " style="left:469px;top:406px;width:195px;height:25px;background:#2e436e;"></div>
<svg class="i" style="left:515px;top:412px;width:13px;height:13px;color:#9da0a8;stroke-width:1.200;" viewBox="0 0 16 16"><use href="#chevR"/></svg>
<div class="t " style="left:535.4px;top:408.5px;height:20px;line-height:20px;font-size:13.7px;">Maven</div>
<svg class="i" style="left:637px;top:412px;width:13px;height:13px;color:#ced0d6;stroke-width:1.100;" viewBox="0 0 16 16"><use href="#projcfg"/></svg>
<div class="t " style="left:535.4px;top:433.5px;height:20px;line-height:20px;font-size:13.7px;">Gradle</div>
<svg class="i" style="left:637px;top:437px;width:13px;height:13px;color:#ced0d6;stroke-width:1.100;" viewBox="0 0 16 16"><use href="#projcfg"/></svg>
<div class="t " style="left:535.4px;top:458.5px;height:20px;line-height:20px;font-size:13.7px;">Gant</div>
<svg class="i" style="left:637px;top:462px;width:13px;height:13px;color:#ced0d6;stroke-width:1.100;" viewBox="0 0 16 16"><use href="#projcfg"/></svg>
<div class="t " style="left:535.4px;top:483.5px;height:20px;line-height:20px;font-size:12.7px;">BSP</div>
<svg class="i" style="left:637px;top:487px;width:13px;height:13px;color:#ced0d6;stroke-width:1.100;" viewBox="0 0 16 16"><use href="#projcfg"/></svg>
<div class="t " style="left:535.4px;top:508.5px;height:20px;line-height:20px;">sBT</div>
<svg class="i" style="left:637px;top:512px;width:13px;height:13px;color:#ced0d6;stroke-width:1.100;" viewBox="0 0 16 16"><use href="#projcfg"/></svg>
<svg class="i" style="left:499.5px;top:537px;width:13px;height:13px;color:#9da0a8;stroke-width:1.200;" viewBox="0 0 16 16"><use href="#chevR"/></svg>
<div class="t " style="left:519.5px;top:533.5px;height:20px;line-height:20px;"><span class="c">编译器</span></div>
<svg class="i" style="left:637px;top:537px;width:13px;height:13px;color:#ced0d6;stroke-width:1.100;" viewBox="0 0 16 16"><use href="#projcfg"/></svg>
<svg class="i" style="left:499.5px;top:562px;width:13px;height:13px;color:#9da0a8;stroke-width:1.200;" viewBox="0 0 16 16"><use href="#chevR"/></svg>
<div class="t " style="left:519.5px;top:558.5px;height:20px;line-height:20px;"><span class="c">调试器</span></div>
<div class="t " style="left:519.5px;top:583.5px;height:20px;line-height:20px;"><span class="c">远程</span> Jar <span class="c">仓库</span></div>
<svg class="i" style="left:637px;top:587px;width:13px;height:13px;color:#ced0d6;stroke-width:1.100;" viewBox="0 0 16 16"><use href="#projcfg"/></svg>
<svg class="i" style="left:499.5px;top:612px;width:13px;height:13px;color:#9da0a8;stroke-width:1.200;" viewBox="0 0 16 16"><use href="#chevR"/></svg>
<div class="t " style="left:519.5px;top:608.5px;height:20px;line-height:20px;"><span class="c">部署</span></div>
<svg class="i" style="left:637px;top:612px;width:13px;height:13px;color:#ced0d6;stroke-width:1.100;" viewBox="0 0 16 16"><use href="#projcfg"/></svg>
<svg class="i" style="left:499.5px;top:637px;width:13px;height:13px;color:#9da0a8;stroke-width:1.200;" viewBox="0 0 16 16"><use href="#chevR"/></svg>
<div class="t " style="left:519.5px;top:633.5px;height:20px;line-height:20px;">Docker</div>
<svg class="i" style="left:499.5px;top:662px;width:13px;height:13px;color:#9da0a8;stroke-width:1.200;" viewBox="0 0 16 16"><use href="#chevR"/></svg>
<div class="t " style="left:519.5px;top:658.5px;height:20px;line-height:20px;">Java <span class="c">分析器</span></div>
<div class="t " style="left:519.5px;top:683.5px;height:20px;line-height:20px;">Kubernetes</div>
<svg class="i" style="left:637px;top:687px;width:13px;height:13px;color:#ced0d6;stroke-width:1.100;" viewBox="0 0 16 16"><use href="#projcfg"/></svg>
<div class="t " style="left:519.5px;top:708.5px;height:20px;line-height:20px;"><span class="c">受信任的位置</span></div>
<div class="t " style="left:519.5px;top:733.5px;height:20px;line-height:20px;"><span class="c">应用程序服务器</span></div>
<div class="t " style="left:519.5px;top:758.5px;height:20px;line-height:20px;"><span class="c">必需插件</span></div>
<svg class="i" style="left:637px;top:762px;width:13px;height:13px;color:#ced0d6;stroke-width:1.100;" viewBox="0 0 16 16"><use href="#projcfg"/></svg>
<div class="t " style="left:519.5px;top:783.5px;height:20px;line-height:20px;"><span class="c">覆盖率</span></div>
<svg class="i" style="left:637px;top:787px;width:13px;height:13px;color:#ced0d6;stroke-width:1.100;" viewBox="0 0 16 16"><use href="#projcfg"/></svg>
<div class="t " style="left:519.5px;top:808.5px;height:20px;line-height:20px;"><span class="c">运行目标</span></div>
<svg class="i" style="left:637px;top:812px;width:13px;height:13px;color:#ced0d6;stroke-width:1.100;" viewBox="0 0 16 16"><use href="#projcfg"/></svg>
<div class="b " style="left:656px;top:232px;width:8px;height:493px;background:rgba(120,122,128,0.450);"></div>
<div class="t bold" style="left:681.9px;top:199.8px;height:20px;line-height:20px;"><span class="c">构建、执行、部署</span></div>
<svg class="i" style="left:796px;top:206px;width:9px;height:9px;color:#9da0a8;stroke-width:1.500;" viewBox="0 0 16 16"><use href="#chevR"/></svg>
<div class="t bold" style="left:810.5px;top:199.8px;height:20px;line-height:20px;"><span class="c">构建工具</span></div>
<svg class="i" style="left:870.5px;top:206px;width:9px;height:9px;color:#9da0a8;stroke-width:1.500;" viewBox="0 0 16 16"><use href="#chevR"/></svg>
<div class="t bold" style="left:886.3px;top:199.8px;height:20px;line-height:20px;">Maven</div>
<svg class="i" style="left:939.8px;top:204.5px;width:13px;height:13px;color:#ced0d6;stroke-width:1.100;" viewBox="0 0 16 16"><use href="#projcfg"/></svg>
<svg class="i" style="left:1380.1px;top:203.9px;width:17px;height:17px;color:#5a5d63;stroke-width:1.200;" viewBox="0 0 16 16"><use href="#arrowL"/></svg>
<svg class="i" style="left:1406.5px;top:203.9px;width:17px;height:17px;color:#5a5d63;stroke-width:1.200;" viewBox="0 0 16 16"><use href="#arrowR"/></svg>
<div class="cb" style="left:685px;top:245px;"></div>
<div class="t " style="left:705.7px;top:242px;height:20px;line-height:20px;"><span class="c">脱机工作</span><span class="k">(<u>O</u>)</span></div>
<div class="cb on" style="left:685px;top:272px;"></div>
<svg class="i" style="left:685.5px;top:272.5px;width:13px;height:13px;" viewBox="0 0 16 16"><use href="#check"/></svg>
<div class="t " style="left:705.7px;top:269px;height:20px;line-height:20px;"><span class="c">以递归方式执行目标</span><span class="k">(<u>G</u>)</span></div>
<div class="cb" style="left:685px;top:299px;"></div>
<div class="t " style="left:705.7px;top:296px;height:20px;line-height:20px;"><span class="c">打印异常堆栈跟踪</span><span class="k">(<u>E</u>)</span></div>
<div class="cb" style="left:685px;top:326px;"></div>
<div class="t " style="left:705.7px;top:323px;height:20px;line-height:20px;"><span class="c">始终更新快照</span><span class="k">(<u>S</u>)</span></div>
<div class="t " style="left:681.9px;top:353.4px;height:20px;line-height:20px;"><span class="c">输出级别</span><span class="k">(<u>L</u>)</span>:</div>
<div class="t " style="left:681.9px;top:388.3px;height:20px;line-height:20px;"><span class="c">校验和策略</span><span class="k">(<u>C</u>)</span>:</div>
<div class="t " style="left:681.9px;top:423.5px;height:20px;line-height:20px;"><span class="c">多项目构建失败策略</span><span class="k">(<u>F</u>)</span>:</div>
<div class="t " style="left:681.9px;top:458px;height:20px;line-height:20px;"><span class="c">线程计数</span></div>
<div class="inp" style="left:933px;top:352px;width:144px;height:24px;background:#393b40;border-radius:3px;"></div>
<div class="t " style="left:939.5px;top:354.8px;height:20px;line-height:20px;"><span class="c">信息</span></div>
<svg class="i" style="left:1058.75px;top:358.25px;width:12.5px;height:12.5px;color:#ced0d6;stroke-width:1.400;" viewBox="0 0 16 16"><use href="#chevD"/></svg>
<div class="inp" style="left:933px;top:387px;width:144px;height:24px;background:#393b40;border-radius:3px;"></div>
<div class="t " style="left:939.5px;top:389.8px;height:20px;line-height:20px;"><span class="c">无全局策略</span></div>
<svg class="i" style="left:1058.75px;top:393.25px;width:12.5px;height:12.5px;color:#ced0d6;stroke-width:1.400;" viewBox="0 0 16 16"><use href="#chevD"/></svg>
<div class="inp" style="left:933px;top:422px;width:144px;height:24px;background:#393b40;border-radius:3px;"></div>
<div class="t " style="left:939.5px;top:424.8px;height:20px;line-height:20px;"><span class="c">默认</span></div>
<svg class="i" style="left:1058.75px;top:428.25px;width:12.5px;height:12.5px;color:#ced0d6;stroke-width:1.400;" viewBox="0 0 16 16"><use href="#chevD"/></svg>
<div class="inp" style="left:933px;top:457px;width:144px;height:24px;border-radius:1px;"></div>
<div class="t " style="left:1090.5px;top:459.5px;height:20px;line-height:20px;font-size:11.5px;">-T <span style="font-size:11.5px">选项</span></div>
<div class="t " style="left:681.9px;top:494px;height:20px;line-height:20px;">Maven <span class="c">主路径</span><span class="k">(<u>H</u>)</span>:</div>
<div class="inp" style="left:804px;top:492px;width:598px;height:24px;border-radius:3px;"></div>
<div class="b " style="left:1379px;top:493px;width:1px;height:22px;background:#4e5157;"></div>
<div class="t " style="left:810.5px;top:492.8px;height:20px;line-height:20px;">D:\kf_program\apache-maven-3.9.14</div>
<svg class="i" style="left:1383.75px;top:498.25px;width:12.5px;height:12.5px;color:#ced0d6;stroke-width:1.400;" viewBox="0 0 16 16"><use href="#chevD"/></svg>
<div class="inp" style="left:1408px;top:492px;width:24px;height:24px;"></div>
<div class="t " style="left:1408px;top:493px;height:20px;line-height:20px;width:24px;text-align:center;">...</div>
<div class="t " style="left:801.7px;top:521.9px;height:20px;line-height:20px;">(<span class="c">版本</span>: 3.9.14)</div>
<div class="t " style="left:681.9px;top:551px;height:20px;line-height:20px;"><span class="c">用户设置文件</span><span class="k">(<u>S</u>)</span>:</div>
<div class="inp" style="left:804px;top:549px;width:569px;height:24px;border-radius:1px;"></div>
<div class="t " style="left:810.5px;top:549.8px;height:20px;line-height:20px;letter-spacing:0.1px;">D:\bladexRespository\settings.xml</div>
<svg class="i" style="left:1349.5px;top:552.5px;width:16px;height:16px;color:#9da0a8;" viewBox="0 0 16 16"><use href="#tw_folder"/></svg>
<div class="cb on" style="left:1389px;top:554px;"></div>
<svg class="i" style="left:1389.5px;top:554.5px;width:13px;height:13px;" viewBox="0 0 16 16"><use href="#check"/></svg>
<div class="t " style="left:1409.5px;top:552px;height:20px;line-height:20px;"><span class="c">重写</span></div>
<div class="t " style="left:681.9px;top:586px;height:20px;line-height:20px;"><span class="c">本地仓库</span><span class="k">(<u>R</u>)</span>:</div>
<div class="inp" style="left:804px;top:584px;width:569px;height:24px;border-radius:1px;border-color:#43454a;"></div>
<div class="t " style="left:810.5px;top:584.8px;height:20px;line-height:20px;color:#5a5d63;">D:\bladexRespository</div>
<svg class="i" style="left:1349.5px;top:587.5px;width:16px;height:16px;color:#9da0a8;" viewBox="0 0 16 16"><use href="#tw_folder"/></svg>
<div class="cb" style="left:1389px;top:589px;"></div>
<div class="t " style="left:1409.5px;top:587px;height:20px;line-height:20px;"><span class="c">重写</span></div>
<div class="cb on" style="left:685px;top:620.5px;"></div>
<svg class="i" style="left:685.5px;top:621px;width:13px;height:13px;" viewBox="0 0 16 16"><use href="#check"/></svg>
<div class="t " style="left:705.7px;top:617.5px;height:20px;line-height:20px;"><span class="c">使用</span> .mvn/maven.config <span class="c">中的设置</span></div>
<div class="b " style="left:469px;top:830px;width:982px;height:1px;background:#1e1f22;"></div>
<svg class="i" style="left:483.7px;top:842.8px;width:23px;height:23px;color:#6f737a;" viewBox="0 0 16 16"><use href="#help"/></svg>
<div class="t " style="left:483.7px;top:842.8px;height:23px;line-height:23px;width:23px;text-align:center;font-size:17.5px;color:#ced0d6;">?</div>
<div class="btn" style="left:1195px;top:842px;width:72px;height:24px;background:#3574f0;border-color:#3574f0;"></div>
<div class="t " style="left:1195px;top:844px;height:20px;line-height:20px;width:72px;text-align:center;color:#fff;"><span class="c">确定</span></div>
<div class="btn" style="left:1279px;top:842px;width:72px;height:24px;"></div>
<div class="t " style="left:1279px;top:844px;height:20px;line-height:20px;width:72px;text-align:center;"><span class="c">取消</span></div>
<div class="btn" style="left:1363px;top:842px;width:73px;height:24px;border-color:#43454a;"></div>
<div class="t " style="left:1363px;top:844px;height:20px;line-height:20px;width:73px;text-align:center;color:#5a5d63;"><span class="c">应用</span><span class="k">(<u>A</u>)</span></div>
<div class="b " style="left:1409px;top:861px;width:16px;height:4px;background:#57b56f;"></div>
<div class="b " style="left:1409px;top:861px;width:4px;height:16px;background:#57b56f;"></div>
<div class="b " style="left:1687.5px;top:918px;width:16px;height:4px;background:#57b56f;"></div>
<div class="b " style="left:1699.5px;top:906px;width:4px;height:16px;background:#57b56f;"></div>
<svg class="b" style="left:1420px;top:870px;width:130px;height:40px;overflow:visible" viewBox="1420 870 130 40"><g transform="translate(0,903.3) skewX(-6.7) translate(0,-903.3)"><path fill="#57b56f" d="M1425 880.3H1447.6a2 2 0 0 1 2 2V890.3l-1 1.2l1 1.2V901.3a2 2 0 0 1-2 2H1425ZM1455.3 878.4H1463.2V903.3H1455.3ZM1463 899.6H1465.4V903.3H1463ZM1470.8 886.7H1489.4V890.3H1470.8ZM1480.9 886.7H1489.4V903.3H1480.9ZM1469.3 892.5H1481.5V903.3H1469.3ZM1505.2 878.4H1513.3V903.3H1505.2ZM1493.4 886.7H1506V903.3H1493.4ZM1519.3 886.7H1540V903.3H1519.3Z"/><path fill="#1e1f22" d="M1432.5 884.9H1441.9V888.5H1432.5ZM1432.3 894.3H1441.7V898.8H1432.3ZM1476.3 896.8H1480.9V898.8H1476.3ZM1500.2 890.7H1505.2V898.8H1500.2ZM1526.6 890.3H1532V892.5H1526.6ZM1528 896.6H1541V898.8H1528Z"/></g></svg>
<div class="t" id="wm2" style="left:1543px;top:874.5px;height:38px;line-height:38px;font-size:31px;font-weight:bold;color:#57b56f;-webkit-text-stroke:1.7px #57b56f;transform-origin:0 50%;transform:skewX(-10deg) scaleX(1.15);letter-spacing:0px;">技术社区</div>
</body></html>
